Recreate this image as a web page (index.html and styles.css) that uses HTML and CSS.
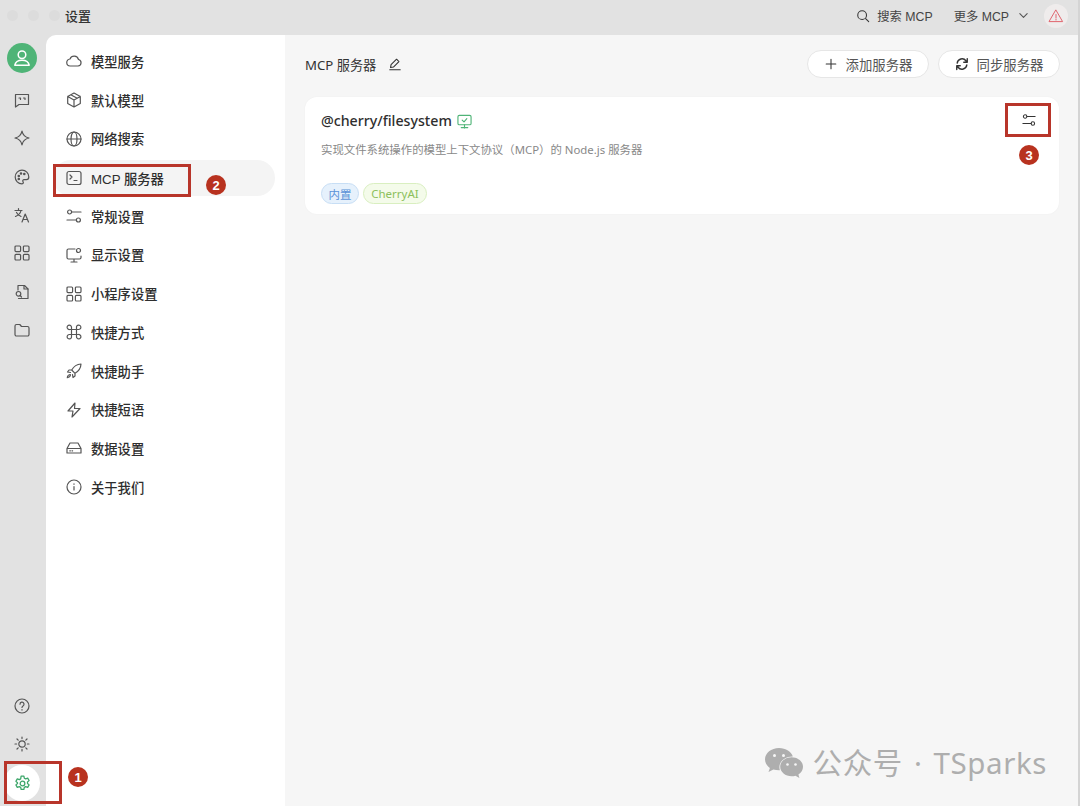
FILE: index.html
```html
<!DOCTYPE html>
<html lang="zh">
<head>
<meta charset="utf-8">
<title>设置</title>
<link rel="stylesheet" href="styles.css">
</head>
<body>
<svg class="defs" width="0" height="0" aria-hidden="true">
  <defs>
    <symbol id="sliders" viewBox="0 0 16 16"><circle cx="3.600" cy="4" r="2"/><path d="M5.600 4H15"/><circle cx="12.400" cy="12" r="2"/><path d="M1 12h9.400"/></symbol>
    <symbol id="grid" viewBox="0 0 16 16"><rect x="1" y="1" width="5.600" height="5.600" rx="1"/><rect x="9.400" y="1" width="5.600" height="5.600" rx="1"/><rect x="1" y="9.400" width="5.600" height="5.600" rx="1"/><rect x="9.400" y="9.400" width="5.600" height="5.600" rx="1"/></symbol>
  </defs>
</svg>
<div class="app">
  <header class="titlebar">
    <div class="lights"><i></i><i></i><i></i></div>
    <div class="title">设置</div>
    <div class="top-actions">
      <span class="top-link"><svg class="ic14" viewBox="0 0 16 16"><circle cx="7" cy="7" r="5"/><path d="M11 11l3.500 3.500"/></svg>搜索 MCP</span>
      <span class="top-link more">更多 MCP<svg class="chev" viewBox="0 0 12 12"><path d="M2 4l4 4 4-4"/></svg></span>
      <span class="warn"><svg viewBox="0 0 16 16"><path d="M8 2.200L14.600 13.600H1.400Z"/><path d="M8 6.500v3.600M8 11.400v.6"/></svg></span>
    </div>
  </header>
  <div class="body">
    <nav class="rail">
      <div class="avatar"><svg viewBox="0 0 20 20"><circle cx="10" cy="6.800" r="3.800"/><path d="M2.800 17.200c.6-3.400 3.400-5 7.200-5s6.600 1.600 7.200 5z"/></svg></div>
      <div class="rail-group">
        <span class="rail-item"><svg viewBox="0 0 16 16"><path d="M1.500 2.500h13v10H5L1.500 15z"/><path d="M5 6h1.500v1.500M9.500 6H11v1.500"/></svg></span>
        <span class="rail-item"><svg viewBox="0 0 16 16"><path d="M8 1c.8 4.300 2.600 6.100 7 7-4.400.9-6.200 2.700-7 7-.8-4.300-2.600-6.100-7-7 4.400-.9 6.200-2.700 7-7z"/></svg></span>
        <span class="rail-item"><svg viewBox="0 0 16 16"><path d="M8 1.200a6.800 6.800 0 1 0 0 13.600c1.500 0 1.600-1.300 1-2.100-.7-1 0-2.100 1.200-2.100h2.200c1.500 0 2.400-1 2.400-2.600C14.800 4 11.800 1.200 8 1.200z"/><circle cx="4.800" cy="7" r=".7"/><circle cx="7" cy="4.500" r=".7"/><circle cx="10.300" cy="5" r=".7"/><circle cx="4.800" cy="10" r=".7"/></svg></span>
        <span class="rail-item"><svg viewBox="0 0 16 16"><path d="M1 3.500h7M4.500 1.500v2M7 3.500C6.400 6.500 4 8.500 1.500 9.500M2.500 5.500c1 2 2.600 3.200 4.500 4"/><path d="M8 15l3.200-8 3.300 8M9.100 12.500h4.400"/></svg></span>
        <span class="rail-item"><svg viewBox="0 0 16 16"><use href="#grid"/></svg></span>
        <span class="rail-item"><svg viewBox="0 0 16 16"><path d="M4 6V1.500h6.500L14 5v9.500H4.500"/><path d="M10 1.500V5h4"/><circle cx="4.500" cy="9.800" r="2.300"/><path d="M6.200 11.500l1.300 1.500"/></svg></span>
        <span class="rail-item"><svg viewBox="0 0 16 16"><path d="M1 4a1.500 1.500 0 0 1 1.500-1.500h3.300l1.700 2h6A1.500 1.500 0 0 1 15 6v6.500a1.500 1.500 0 0 1-1.500 1.500h-11A1.500 1.500 0 0 1 1 12.500z"/></svg></span>
      </div>
      <div class="rail-bottom">
        <span class="rail-item"><svg viewBox="0 0 16 16"><circle cx="8" cy="8" r="7"/><path d="M6 6.200a2 2 0 1 1 3 1.700c-.7.400-1 .8-1 1.500M8 11.600v.5"/></svg></span>
        <span class="rail-item"><svg viewBox="0 0 16 16"><circle cx="8" cy="8" r="3.200"/><path d="M8 1v1.600M8 13.400V15M1 8h1.600M13.400 8H15M3 3l1.200 1.200M11.800 11.800L13 13M3 13l1.200-1.200M11.800 4.200L13 3"/></svg></span>
        <span class="rail-item gear"><svg viewBox="0 0 16 16"><path d="M6.700 1h2.600l.4 2 1.300.7 1.900-.7 1.300 2.300-1.500 1.300v1.400l1.500 1.300-1.300 2.300-1.900-.7-1.300.7-.4 2H6.700l-.4-2-1.300-.7-1.900.7-1.300-2.300 1.500-1.300V7.300L1.800 6l1.300-2.300 1.900.7 1.300-.7z"/><circle cx="8" cy="8" r="2.200"/></svg></span>
      </div>
    </nav>
    <aside class="sidebar">
      <a class="nav-item"><svg viewBox="0 0 16 16"><path d="M4.500 13a3.500 3.500 0 0 1-.5-7A4.500 4.500 0 0 1 12.500 6.500 3.300 3.300 0 0 1 12 13z"/></svg>模型服务</a>
      <a class="nav-item"><svg viewBox="0 0 16 16"><path d="M8 1l6.300 3.500v7L8 15l-6.300-3.500v-7zM1.700 4.500L8 8l6.300-3.500M8 8v7M4.800 2.800l6.400 3.500"/></svg>默认模型</a>
      <a class="nav-item"><svg viewBox="0 0 16 16"><circle cx="8" cy="8" r="7"/><ellipse cx="8" cy="8" rx="3" ry="7"/><path d="M1 8h14"/></svg>网络搜索</a>
      <a class="nav-item active"><svg viewBox="0 0 16 16"><rect x="1" y="1.500" width="14" height="13" rx="2"/><path d="M4 5l2 2-2 2M8 10.500h3"/></svg>MCP 服务器</a>
      <a class="nav-item"><svg viewBox="0 0 16 16"><use href="#sliders"/></svg>常规设置</a>
      <a class="nav-item"><svg viewBox="0 0 16 16"><path d="M9 2H2.500A1.500 1.500 0 0 0 1 3.500v7A1.500 1.500 0 0 0 2.500 12h11a1.500 1.500 0 0 0 1.500-1.500V9M8 12v3M5 15h6"/><circle cx="12.500" cy="3.500" r="2"/></svg>显示设置</a>
      <a class="nav-item"><svg viewBox="0 0 16 16"><use href="#grid"/></svg>小程序设置</a>
      <a class="nav-item"><svg viewBox="0 0 16 16"><path d="M5.500 5.500h5v5h-5zM5.500 5.500H3.700a2.200 2.200 0 1 1 1.800-2zM10.500 5.500V3.700a2.200 2.200 0 1 1 2 1.800zM5.500 10.500v1.800a2.200 2.200 0 1 1-2-1.800zM10.500 10.500h1.800a2.200 2.200 0 1 1-1.800 2z"/></svg>快捷方式</a>
      <a class="nav-item"><svg viewBox="0 0 16 16"><path d="M15 1c-4 .2-7 2-9.300 6l3.300 3.300C13 8 14.800 5 15 1zM5.700 7H3L1.500 9l3 .5M9 10.300V13l-2 1.500-.5-3"/><path d="M4 11.500c-1.500.3-2.500 1.300-2.700 3.200 1.900-.2 2.900-1.200 3.200-2.700z"/></svg>快捷助手</a>
      <a class="nav-item"><svg viewBox="0 0 16 16"><path d="M9 1L2 9h5l-1 6 8-8.500H8.500z"/></svg>快捷短语</a>
      <a class="nav-item"><svg viewBox="0 0 16 16"><path d="M4 3h8l3 5.500V13H1V8.500zM1 8.500h14M3.800 10.800h.6M6 10.800h.6"/></svg>数据设置</a>
      <a class="nav-item"><svg viewBox="0 0 16 16"><circle cx="8" cy="8" r="7"/><path d="M8 7.500v3.500M8 4.800v.5"/></svg>关于我们</a>
    </aside>
    <main class="main">
      <div class="main-head">
        <div class="heading">MCP 服务器<svg viewBox="0 0 16 16"><path d="M9.800 2.500l2.700 2.700-6.300 6.300-3.300.6.600-3.300zM2 14.500h12"/></svg></div>
        <div class="head-btns">
          <button class="pill"><svg viewBox="0 0 16 16"><path d="M8 2.500v11M2.500 8h11"/></svg>添加服务器</button>
          <button class="pill"><svg class="sync" viewBox="0 0 16 16"><path d="M2.500 7A5.600 5.600 0 0 1 12.500 4.300L14 6M13.500 9A5.600 5.600 0 0 1 3.500 11.700L2 10M14 1.800V6H10M2 14.200V10H6"/></svg>同步服务器</button>
        </div>
      </div>
      <section class="card">
        <div class="card-text">
          <h2 class="card-title">@cherry/filesystem<svg viewBox="0 0 16 16"><rect x="1" y="1.500" width="14" height="10" rx="1.500"/><path d="M8 11.500V15M4.500 14.500h7M5.500 6.500l2 2 3-3.500"/></svg></h2>
          <p class="card-desc">实现文件系统操作的模型上下文协议（MCP）的 Node.js 服务器</p>
          <div class="tags"><span class="tag blue">内置</span><span class="tag green">CherryAI</span></div>
        </div>
        <svg class="card-cfg" viewBox="0 0 16 16"><use href="#sliders"/></svg>
      </section>
      <div class="watermark"><svg viewBox="0 0 40 32"><path d="M15 1C7.300 1 1 6 1 12.300c0 3.500 1.900 6.600 4.900 8.700L4.500 25l4.900-2.600c1.700.5 3.600.8 5.600.8h.9a10 10 0 0 1-.5-3c0-6 5.700-10.800 12.700-10.800h.7C27.600 5 21.800 1 15 1z"/><path d="M39 19.800c0-5.300-5.200-9.500-11.400-9.500S16.200 14.500 16.200 19.800s5.200 9.500 11.400 9.500c1.400 0 2.700-.2 3.900-.6l3.900 2.200-1-3.300c2.800-1.800 4.600-4.600 4.600-7.800z"/><g class="eyes"><circle cx="10.500" cy="8.500" r="1.500"/><circle cx="19.500" cy="8.500" r="1.500"/><circle cx="23.500" cy="17.500" r="1.300"/><circle cx="31.500" cy="17.500" r="1.300"/></g></svg><span>公众号<span class="dot">·</span>TSparks</span></div>
    </main>
  </div>
  <div class="mark mark-gear"></div>
  <div class="mark mark-nav"></div>
  <div class="mark mark-cfg"></div>
  <span class="badge badge-1">1</span>
  <span class="badge badge-2">2</span>
  <span class="badge badge-3">3</span>
</div>
</body>
</html>
```
FILE: styles.css
```css
* { box-sizing: border-box; }
html, body { margin: 0; height: 100%; }
body {
  font-family: "Liberation Sans", "Noto Sans CJK SC", sans-serif;
  color: #333;
  background: #f6f6f6;
  overflow: hidden;
}
.defs { position: absolute; }
svg { fill: none; stroke: currentColor; stroke-width: 1.200; stroke-linecap: round; stroke-linejoin: round; flex: none; }
.app { position: relative; width: 1080px; height: 806px; display: flex; flex-direction: column; background: #e2e2e2; border-right: 2px solid #d4d4d4; }

.titlebar { height: 35px; flex: none; display: flex; align-items: center; padding: 0 10px 4px 7px; }
.lights { display: flex; gap: 10px; width: 58px; }
.lights i { width: 11px; height: 11px; border-radius: 50%; background: #dcdcdc; }
.title { font-size: 13px; font-weight: 500; color: #333; }
.top-actions { margin-left: auto; display: flex; align-items: center; font-size: 12.300px; color: #444; }
.top-link { display: flex; align-items: center; gap: 7px; }
.more { margin-left: 21px; gap: 9px; }
.ic14 { width: 14px; height: 14px; color: #333; }
.chev { width: 11px; height: 11px; color: #555; }
.warn { width: 24px; height: 24px; margin-left: 15px; border-radius: 50%; background: #efecec; display: flex; align-items: center; justify-content: center; }
.warn svg { width: 16px; height: 16px; color: #e0656e; stroke-width: 1; }

.body { flex: 1; display: flex; min-height: 0; }
.rail { width: 46px; flex: none; display: flex; flex-direction: column; align-items: center; padding: 8px 2px 5px 0; color: #555; }
.avatar { width: 30px; height: 30px; border-radius: 50%; background: #4fb477; display: flex; align-items: center; justify-content: center; color: #fff; }
.avatar svg { width: 20px; height: 20px; stroke-width: 1.500; }
.rail-group { display: flex; flex-direction: column; margin-top: 8px; }
.rail-item { width: 32px; height: 38.300px; display: flex; align-items: center; justify-content: center; }
.rail-item svg { width: 16px; height: 16px; }
.rail-bottom { margin-top: auto; display: flex; flex-direction: column; align-items: center; }
.gear { height: 36px; width: 36px; margin-top: 2px; border-radius: 50%; background: #fff; color: #3da66a; }
.gear svg { width: 17px; height: 17px; }

.sidebar { width: 239px; flex: none; background: #fff; border-top-left-radius: 10px; padding: 7px 10px 0 7px; }
.nav-item { height: 38.700px; display: flex; align-items: center; gap: 9px; padding-left: 13px; font-size: 13.300px; font-weight: 500; color: #2e2e2e; white-space: nowrap; }
.nav-item svg { width: 16px; height: 16px; color: #555; }
.nav-item.active { height: 36px; margin: 2px 0 .9px; border-radius: 18px; background: #f4f4f4; }

.main { flex: 1; min-width: 0; position: relative; background: #f6f6f6; padding: 14px 19px 0 20px; }
.main-head { display: flex; align-items: center; justify-content: space-between; height: 30px; margin-right: -1px; }
.heading { display: flex; align-items: center; gap: 12px; font-family: "Noto Sans", "Noto Sans CJK SC", sans-serif; font-size: 13.200px; color: #333; }
.heading svg { width: 14px; height: 14px; }
.head-btns { display: flex; gap: 9px; }
.pill { height: 28px; width: 122px; border: 1px solid #e6e6e6; border-radius: 14px; background: #fff; display: flex; align-items: center; justify-content: center; gap: 8px; font: 13.400px "Liberation Sans", "Noto Sans CJK SC", sans-serif; color: #555; padding: 0; }
.pill svg { width: 14px; height: 14px; color: #333; }
.pill .sync { stroke-width: 1.600; }
.card { margin-top: 18px; height: 117px; background: #fff; border-radius: 12px; display: flex; justify-content: space-between; padding: 14px 23px 0 16px; box-shadow: 0 0 2px rgba(0,0,0,.04); }
.card-title { margin: 0; display: flex; align-items: center; gap: 5px; font-family: "Noto Sans", sans-serif; font-size: 14.200px; font-weight: 500; color: #2e2e2e; line-height: 20px; }
.card-title svg { width: 15px; height: 15px; color: #4fb477; }
.card-desc { margin: 11px 0 0; font-family: "Noto Sans", "Noto Sans CJK SC", sans-serif; font-size: 11.400px; color: #888; line-height: 15px; }
.tags { display: flex; gap: 4px; margin-top: 26px; }
.tag { height: 21px; border-radius: 11px; border: 1px solid; display: flex; align-items: center; justify-content: center; font-size: 11.500px; }
.tag.blue { width: 38px; color: #5a93d8; background: #e6f1fc; border-color: #c7def5; }
.tag.green { width: 64px; color: #8cc05c; background: #f4fbea; border-color: #d9efc0; font-family: "Noto Sans", sans-serif; }
.card-cfg { width: 14px; height: 14px; margin-top: 2px; color: #333; }
.watermark { position: absolute; right: 31px; bottom: 25px; display: flex; align-items: center; gap: 9px; font-family: "Noto Sans", "Noto Sans CJK SC", sans-serif; font-size: 29.500px; color: #aeaeae; letter-spacing: .6px; white-space: nowrap; line-height: 36px; }
.watermark svg { width: 40px; height: 32px; fill: #aeaeae; stroke: none; }
.watermark .eyes { fill: #f6f6f6; }
.dot { padding: 0 11px; }

.mark { position: absolute; border: 3px solid #b8352a; pointer-events: none; }
.mark-gear { left: 4px; top: 761px; width: 58px; height: 43px; }
.mark-nav { left: 53px; top: 164px; width: 138px; height: 33px; }
.mark-cfg { left: 1005px; top: 103px; width: 46px; height: 34px; }
.badge { position: absolute; width: 20px; height: 20px; border-radius: 50%; background: #b8321f; color: #fff; font-size: 13px; font-weight: 700; display: flex; align-items: center; justify-content: center; }
.badge-1 { left: 68px; top: 767px; }
.badge-2 { left: 206px; top: 175px; }
.badge-3 { left: 1019px; top: 145px; }
```
